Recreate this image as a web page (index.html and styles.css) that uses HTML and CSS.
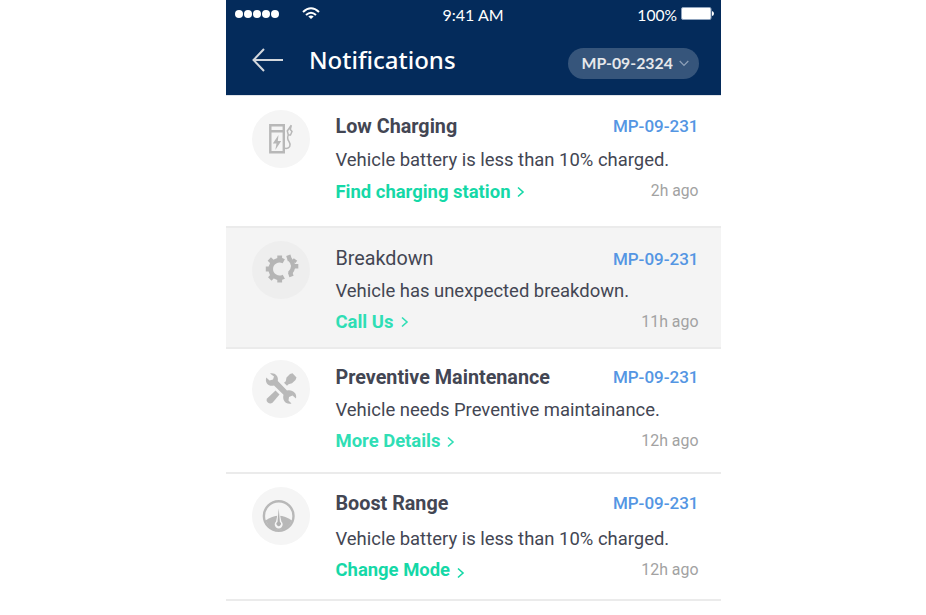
FILE: index.html
```html
<!DOCTYPE html>
<html lang="en">
<head>
<meta charset="utf-8">
<title>Notifications</title>
<link rel="stylesheet" href="styles.css">
</head>
<body>
<main class="phone">
  <header class="header">
    <div class="status">
      <span class="signal"><i></i><i></i><i></i><i></i><i></i></span>
      <svg class="wifi" width="18" height="13" viewBox="0 0 18 13" fill="none" stroke="#fff" stroke-width="2"><path d="M1 5Q9 -2.6 17 5"/><path d="M4 8Q9 3.4 14 8"/><path d="M9 12L6.3 9.4Q9 7.5 11.7 9.4Z" fill="#fff" stroke="none"/></svg>
      <span class="clock">9:41 AM</span>
      <span class="percent">100%</span>
      <svg class="battery" width="33" height="13" viewBox="0 0 33 13"><rect x=".5" y=".5" width="29.500" height="12" rx="1.500" fill="#fff" stroke="#8fa3bd"/><path d="M31 4q2 .5 2 2.500t-2 2.500z" fill="#fff"/></svg>
    </div>
    <div class="bar">
      <svg class="back" width="32" height="24" viewBox="0 0 32 24" fill="none" stroke="#d3d7dc" stroke-width="2"><path d="M12 1L1.500 12L12 23M1.500 12H31"/></svg>
      <h1 class="heading">Notifications</h1>
      <button class="picker"><span>MP-09-2324</span><svg width="10" height="7" viewBox="0 0 10 7" fill="none" stroke="#8fa1b8" stroke-width="1.200"><path d="M.7 1L5 5.500L9.300 1"/></svg></button>
    </div>
  </header>

  <article class="row low">
    <div class="badge"><svg width="58" height="58" viewBox="0 0 58 58" fill="none" stroke="#b8b8b8"><path d="M18.300 15.300H31.800V42.200H18.300ZM18 21.300H32" stroke-width="2.400"/><path d="M26.500 25L20.800 33.500H24.500L23.300 40L29.200 31H25.800Z" fill="#b8b8b8" stroke="none"/><path d="M33 38.300C38 39 39.300 35 37 31.500C34.500 28.500 35.500 26.500 36.500 24.500M36.300 25L35.300 21L39.300 15.300L38.300 19.500L40 21.500L38.500 25Z" stroke-width="1.500"/></svg></div>
    <div class="content">
      <div class="line top"><h2 class="title">Low Charging</h2><span class="vehicle">MP-09-231</span></div>
      <p class="desc">Vehicle battery is less than 10% charged.</p>
      <div class="line foot"><a class="action">Find charging station<svg class="chev" width="8" height="12" viewBox="0 0 8 12"><path d="M1 1.500L6 6L1 10.500"/></svg></a><time>2h ago</time></div>
    </div>
  </article>

  <article class="row breakdown">
    <div class="badge"><svg width="58" height="58" viewBox="0 0 58 58" fill="none" stroke="#b5b5b5"><path d="M31.800 20.300A8.800 8.800 0 1 0 31.800 35.700" stroke-width="4.600"/><path d="M27.700 19V14.500M27.700 37V41.500M19 28H13.800M21.500 22L17.300 18M21.500 34L17.800 38" stroke-width="4.800"/><path d="M37 17.500Q45 25 37.500 32.500" stroke-width="4.200"/><path d="M38 19.500L36.300 14.300M41.500 21L43.500 18.500M41 25.200H46.300M38 31L39.500 35.500" stroke-width="4.400"/></svg></div>
    <div class="content">
      <div class="line top"><h2 class="title">Breakdown</h2><span class="vehicle">MP-09-231</span></div>
      <p class="desc">Vehicle has unexpected breakdown.</p>
      <div class="line foot"><a class="action">Call Us<svg class="chev" width="8" height="12" viewBox="0 0 8 12"><path d="M1 1.500L6 6L1 10.500"/></svg></a><time>11h ago</time></div>
    </div>
  </article>

  <article class="row maintenance">
    <div class="badge"><svg width="58" height="58" viewBox="0 0 58 58" fill="#b9b9b9"><path d="M18 13.500C22 12 27 15.500 25.800 21L35 30.500C40 29 45.500 33 44 38.500L40.500 35.500L37 37L36.500 40.500L39.500 43.500C34 45 30 40.500 31.500 34.800L22 25.500C17 27 12.500 23 14.300 17.500L17.500 20.500L21 19.500L22 16.500Z"/><path d="M40.500 13.300L44.500 17.500L43.500 20L40 23.300L36.500 24.300L35 25.800L32 22.800L33.800 21.200L34.500 17.500L38 14Z"/><path d="M23.500 30.500L27.500 34.500L20.500 42.800Q18 44.500 15.800 42.500T15.300 38.300Z"/></svg></div>
    <div class="content">
      <div class="line top"><h2 class="title">Preventive Maintenance</h2><span class="vehicle">MP-09-231</span></div>
      <p class="desc">Vehicle needs Preventive maintainance.</p>
      <div class="line foot"><a class="action">More Details<svg class="chev" width="8" height="12" viewBox="0 0 8 12"><path d="M1 1.500L6 6L1 10.500"/></svg></a><time>12h ago</time></div>
    </div>
  </article>

  <article class="row boost">
    <div class="badge"><svg width="58" height="58" viewBox="0 0 58 58"><circle cx="26.700" cy="29" r="14.800" fill="none" stroke="#b8b8b8" stroke-width="2.400"/><path d="M13.500 33.500Q26.700 24 40 33.500Q36 43 26.700 43T13.500 33.500Z" fill="#b8b8b8"/><path d="M26.700 22L24 34.500A4 4 0 1 0 29.400 34.500Z" fill="#f5f5f5"/><path d="M26.700 21.500L25.500 35A2.200 2.200 0 1 0 27.900 35Z" fill="#b0b0b0"/></svg></div>
    <div class="content">
      <div class="line top"><h2 class="title">Boost Range</h2><span class="vehicle">MP-09-231</span></div>
      <p class="desc">Vehicle battery is less than 10% charged.</p>
      <div class="line foot"><a class="action">Change Mode<svg class="chev" width="8" height="12" viewBox="0 0 8 12"><path d="M1 1.500L6 6L1 10.500"/></svg></a><time>12h ago</time></div>
    </div>
  </article>
</main>
</body>
</html>
```
FILE: styles.css
```css
* { box-sizing: border-box; }
body { margin: 0; background: #fff; font-family: Roboto, sans-serif; color: #434653; }
h1, h2, p { margin: 0; }
.phone { width: 495px; margin-left: 226px; }
.header { height: 96px; background: #042b5b; border-bottom: 1px solid #dfe3e9; color: #fff; }
.status { height: 28px; display: flex; align-items: center; padding: 0 7px 0 8.500px; font: 16px/28px Lato, sans-serif; }
.signal { display: flex; gap: 1.200px; width: 46px; }
.signal i { width: 8px; height: 8px; border-radius: 50%; background: #fff; }
.wifi { margin: -2px 0 0 21px; }
.clock { margin: 2px 0 0 123px; width: 62px; white-space: nowrap; }
.percent { margin: 1px 4px 0 auto; white-space: nowrap; font-size: 15.600px; }
.battery { margin-top: -1px; }
.bar { display: flex; height: 67px; align-items: flex-start; padding: 0 22.500px 0 26px; }
.back { margin-top: 20px; }
.heading { margin: 14px 0 0 25px; font: 500 24px/36px "Noto Sans", sans-serif; }
.picker { margin: 20px 0 0 auto; width: 131px; height: 31px; border: 0; border-radius: 16px; background: #36557b; color: #e6e8eb; display: flex; align-items: center; gap: 6px; padding: 0 0 0 14px; font: 700 15.800px/29px Lato, sans-serif; white-space: nowrap; }
.picker span { padding-bottom: 2px; }
.row { display: flex; padding: 0 22.500px 0 26px; border-bottom: 2px solid #ebebeb; }
.badge { width: 58px; height: 58px; border-radius: 50%; background: #f5f5f5; flex: none; }
.badge svg { display: block; }
.content { flex: 1; margin-left: 25.500px; }
.line { display: flex; justify-content: space-between; height: 24px; }
.title, .desc, .action, .vehicle, time { line-height: 24px; white-space: nowrap; }
.title { margin-top: 1px; font-size: 19.750px; font-weight: 700; }
.desc { font-size: 18.450px; }
.action { font-size: 18.450px; font-weight: 700; color: #15d8a7; }
.vehicle { font-size: 17px; font-weight: 500; color: #5496e3; }
time { font-size: 15.900px; color: #a2a2a2; }
.chev { margin-left: 7px; vertical-align: -1px; fill: none; stroke: currentColor; stroke-width: 1.600; }
.low { height: 132px; padding-top: 13.500px; }
.low .content { padding-top: 4.500px; }
.low .desc { margin: 10px 0 8px; }
.low .chev { vertical-align: 0; }
.low time { margin-top: -1px; font-size: 15.700px; }
.breakdown { height: 121px; padding-top: 13px; background: #f4f4f4; }
.breakdown .badge { background: #eee; }
.breakdown .content { padding-top: 5px; }
.breakdown .title { font-weight: 400; }
.breakdown .vehicle { margin-top: 1px; }
.breakdown .desc { margin: 9px 0 7px; }
.breakdown .chev { margin-left: 8px; vertical-align: 0; }
.breakdown .action, .maintenance .action { color: #2fdeb5; }
.maintenance { height: 125px; padding-top: 11px; }
.maintenance .content { padding-top: 5px; }
.maintenance .desc { margin: 9px 0 7px; }
.boost { height: 127px; padding-top: 13px; }
.boost .content { padding-top: 5px; }
.boost .title { margin-top: 0; }
.boost .vehicle { margin-top: -1px; }
.boost .desc { margin: 11px 0 7px; }
.boost .chev { vertical-align: -3px; }
```
